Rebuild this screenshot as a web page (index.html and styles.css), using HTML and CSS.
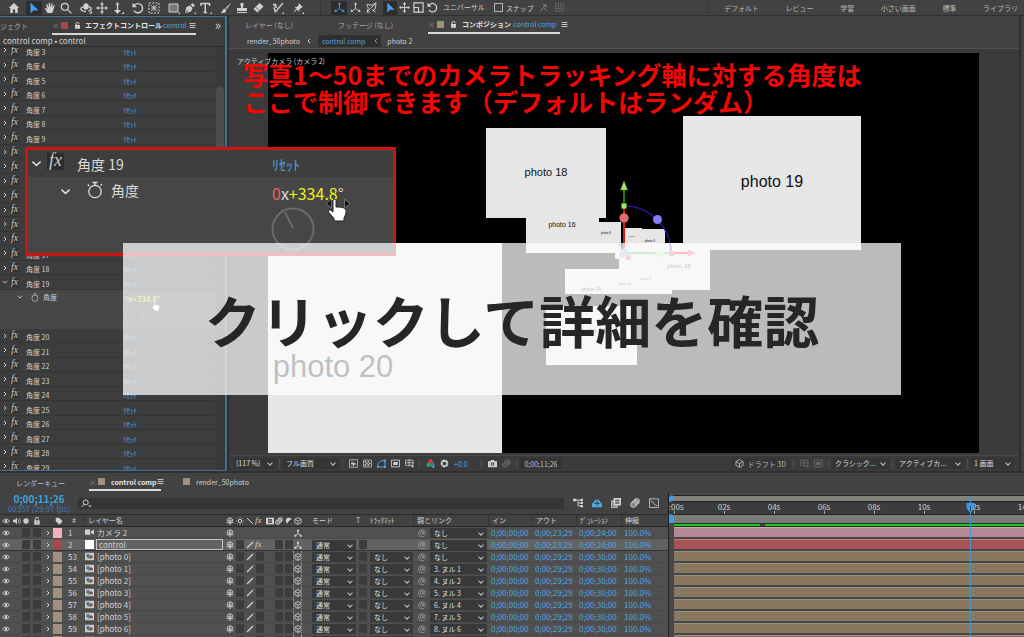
FILE: index.html
```html
<!DOCTYPE html>
<html lang="ja">
<head>
<meta charset="utf-8">
<title>control comp</title>
<link rel="stylesheet" href="styles.css">
</head>
<body>
<svg class="defs" aria-hidden="true">
  <symbol id="i-home" viewBox="0 0 12 12"><path fill="currentColor" d="M6 1 .8 6H2.300v5h2.600V7.500h2.200V11h2.600V6h1.500z"/></symbol>
  <symbol id="i-arrow" viewBox="0 0 12 12"><path fill="currentColor" d="M2.500.5v11l3-3h5z"/></symbol>
  <symbol id="i-hand" viewBox="0 0 12 12"><path fill="currentColor" d="M3.500 11 .8 6.300l1-.5L3.500 7.500 2.200 2.400l1-.3L4.800 5.500 4.700 1l1.200-.1.5 4.500L7.500 1.300l1.100.3-.5 4.200L9.800 3l.9.5L9 9 8 11z"/></symbol>
  <symbol id="i-search" viewBox="0 0 12 12"><g fill="none" stroke="currentColor" stroke-width="1.200"><circle cx="4.800" cy="4.800" r="3.500"/><path d="m7.400 7.400 4 4"/></g></symbol>
  <symbol id="i-find" viewBox="0 0 14 12"><g fill="none" stroke="currentColor" stroke-width="1.300"><circle cx="6" cy="4.500" r="3.300"/><path d="M3.600 7 .8 10.500"/></g><path fill="currentColor" d="M9 8.500h5l-2.500 2.500z"/></symbol>
  <symbol id="i-orbit" viewBox="0 0 12 12"><path fill="none" stroke="currentColor" stroke-width="1.400" d="M6 9.500C2 9.500.7 7.800 1 6.500 1.400 4.500 10 3.700 11 6c.4 1.200-1 2.500-2.500 3"/><path fill="currentColor" d="M3.500 2.500 6 1l2.500 1.500v4L6 8 3.500 6.500zM9 11.500h3v-3z"/></symbol>
  <symbol id="i-move" viewBox="0 0 12 12"><path stroke="currentColor" stroke-width="1.200" d="M6 2v8M2 6h8"/><path fill="currentColor" d="m6 0 2 2.500H4zM6 12l2-2.500H4zM0 6l2.500-2v4zM12 6 9.500 4v4z"/></symbol>
  <symbol id="i-dolly" viewBox="0 0 12 12"><path stroke="currentColor" stroke-width="1.400" d="M5.500 2v8"/><path fill="currentColor" d="m5.500 0 2 2.500h-4zM5.500 12l3.500-4H2zM9.500 12H12V9.500z"/></symbol>
  <symbol id="i-rot" viewBox="0 0 12 12"><path fill="none" stroke="currentColor" stroke-width="1.400" d="M2.500 3.200A4.600 4.600 0 1 1 2 8.500"/><path fill="currentColor" d="M.5.800v4.500H5z"/></symbol>
  <symbol id="i-region" viewBox="0 0 12 12"><path fill="none" stroke="currentColor" stroke-dasharray="2 1.300" d="M1 1h10v10H1z"/><path stroke="currentColor" d="M6 3v6M3 6h6M3 3l6 6M9 3 3 9" stroke-width=".8"/></symbol>
  <symbol id="i-rect" viewBox="0 0 12 12"><path fill="#777" stroke="currentColor" d="M1 2h9v8H1z"/><path fill="currentColor" d="M10 12h2v-2z"/></symbol>
  <symbol id="i-pen" viewBox="0 0 12 12"><path fill="currentColor" d="M1 11 2.500 5 6 3.500 8.500 6 7 9.500zM6.700 2.800 8.500 1 11 3.500 9.200 5.300zM10 12h2v-2z"/><path stroke="#424242" d="m1.500 10.500 3-3" stroke-width=".8"/></symbol>
  <symbol id="i-type" viewBox="0 0 12 12"><path fill="none" stroke="currentColor" stroke-width="1.500" d="M1 4V1.500h8.500V4M5.250 1.500v9M3.500 10.500h3.500"/><path fill="currentColor" d="M10 12h2v-2z"/></symbol>
  <symbol id="i-brush" viewBox="0 0 12 12"><path fill="currentColor" d="M11.500.5 5.500 6l1.200 1.300zM4.700 6.500c-2 .2-1.500 3-4 4 2.500 1.200 6 .2 5.500-2.500z"/></symbol>
  <symbol id="i-stamp" viewBox="0 0 12 12"><path fill="currentColor" d="M4.500 1h3v2l-.7 3H11v3H1V6h4.200l-.7-3zM1 10h10v1H1z"/></symbol>
  <symbol id="i-eraser" viewBox="0 0 12 12"><path fill="currentColor" d="m7.500 1 4 3.500-6 6-4-3.500z"/><path stroke="#424242" stroke-width=".8" d="m3.500 5 4 3.700"/></symbol>
  <symbol id="i-roto" viewBox="0 0 12 12"><path fill="none" stroke="currentColor" stroke-width="1.300" d="m11 1-6 7M3 1.500 4.500 5 2 6l1.500 4M1 2l2 2"/><path fill="currentColor" d="M4 7.500 2 11l4-2zM10 12h2v-2z"/></symbol>
  <symbol id="i-pin" viewBox="0 0 12 12"><path fill="currentColor" d="m6.500.8 4.500 4.500-1.500.3-2 2-.2 2.200-4.700-4.700 2.200-.2 2-2zM4 7 1 11l4-3zM10 12h2v-2z"/></symbol>
  <symbol id="i-axis" viewBox="0 0 12 12"><g fill="none" stroke="currentColor"><path d="M6 2v5L2 10M6 7l4 3"/></g><path fill="currentColor" d="m6 0 1.600 2.600H4.400zM.5 11l.8-3 2 2.500zM11.500 11l-.8-3-2 2.500z"/></symbol>
  <symbol id="i-axis3" viewBox="0 0 12 12"><path fill="none" stroke="currentColor" d="M1 2.500 6.500 3.500 11 1 10 7.500 7.500 9M1 2.500 2.500 7 1 11M11 1 1 11h3M6.500 8.500l4 2.500"/></symbol>
  <symbol id="i-scale" viewBox="0 0 12 12"><path fill="none" stroke="currentColor" stroke-width="1.300" d="M1 1h10v10H1zM1 6h5v5"/></symbol>
  <symbol id="i-snap" viewBox="0 0 12 12"><path fill="none" stroke="currentColor" d="m2 11 3-4 4-4M5.500 2.500H9.500V6M6 6l4 4"/></symbol>
  <symbol id="i-grid" viewBox="0 0 12 12"><path fill="none" stroke="currentColor" stroke-dasharray="1.500 1.500" d="M1 1h10v10H1zM4 4h4v4H4z"/></symbol>
  <symbol id="i-lock" viewBox="0 0 12 12"><path fill="currentColor" d="M2 5h8v6.500H2z"/><path fill="none" stroke="currentColor" stroke-width="1.500" d="M3.500 5.500V2.700a2.500 2 0 0 1 5 0v.8"/><path stroke="#424242" stroke-width="1.200" d="M6 7v2.500"/></symbol>
  <symbol id="i-menu" viewBox="0 0 12 12"><path stroke="currentColor" stroke-width="1.400" d="M1 2.500h10M1 6h10M1 9.500h10"/></symbol>
  <symbol id="i-right" viewBox="0 0 12 12"><path fill="none" stroke="currentColor" stroke-width="2" d="m4 2 4 4-4 4"/></symbol>
  <symbol id="i-left" viewBox="0 0 12 12"><path fill="none" stroke="currentColor" stroke-width="2" d="M8 2 4 6l4 4"/></symbol>
  <symbol id="i-down" viewBox="0 0 12 12"><path fill="none" stroke="currentColor" stroke-width="1.700" d="m1.500 4 4.500 4 4.500-4"/></symbol>
  <symbol id="i-watch" viewBox="0 0 16 18"><g fill="none" stroke="currentColor" stroke-width="1.300"><circle cx="8" cy="10.500" r="6.200"/><path d="M8 4V1.500M5.500 1.500h5M2 5 .8 3.500M13.500 4.500l1.500-1.200"/></g></symbol>
  <symbol id="i-eye" viewBox="0 0 12 12"><path fill="none" stroke="currentColor" stroke-width="1.400" d="M1 6c2.500-3.700 7.500-3.700 10 0-2.500 3.700-7.500 3.700-10 0z"/><circle cx="6" cy="6" r="1.900" fill="currentColor"/></symbol>
  <symbol id="i-audio" viewBox="0 0 12 12"><path fill="currentColor" d="M0 4h3l3-3v10L3 8H0z"/><path fill="none" stroke="currentColor" d="M7.500 3.500a4 4 0 0 1 0 5M9 1.500a6 6 0 0 1 0 9"/></symbol>
  <symbol id="i-dot" viewBox="0 0 12 12"><circle cx="6" cy="6" r="4" fill="currentColor"/></symbol>
  <symbol id="i-tag" viewBox="0 0 12 12"><path fill="currentColor" d="M1 1h5l5.500 5.500-5 5L1 6z"/></symbol>
  <symbol id="i-shy" viewBox="0 0 12 12"><path fill="none" stroke="currentColor" stroke-width="1.500" d="M2 6V4.500C2 .5 10 .5 10 4.500V6zM6 2v10M1 8.500h10"/></symbol>
  <symbol id="i-sun" viewBox="0 0 12 12"><circle cx="6" cy="6" r="2.500" fill="none" stroke="currentColor" stroke-width="1.500"/><path stroke="currentColor" d="M6 0v2M6 10v2M0 6h2M10 6h2M2 2l1 1M9 9l1 1M10 2 9 3M3 9l-1 1"/></symbol>
  <symbol id="i-slash" viewBox="0 0 12 12"><path stroke="currentColor" stroke-width="1.800" d="m1.500 10.500 9-9"/></symbol>
  <symbol id="i-bslash" viewBox="0 0 12 12"><path stroke="currentColor" stroke-width="1.500" d="m1.500 1.500 9 9"/></symbol>
  <symbol id="i-frame" viewBox="0 0 12 12"><path fill="currentColor" d="M0 1h12v10H0z"/><path fill="#555" d="M3 3h6v2.500H3zM3 6.500h6V9H3z"/></symbol>
  <symbol id="i-blur" viewBox="0 0 12 12"><g fill="#888" stroke="currentColor"><circle cx="8" cy="4" r="3.300"/><circle cx="6" cy="6" r="3.300"/><circle cx="4" cy="8" r="3.300"/></g></symbol>
  <symbol id="i-adj" viewBox="0 0 12 12"><circle cx="6" cy="6" r="4.700" fill="currentColor"/><path fill="#333" d="M3 9.500A4.300 4.300 0 0 0 9.500 3z"/></symbol>
  <symbol id="i-cube" viewBox="0 0 12 12"><path fill="none" stroke="currentColor" stroke-width="1.200" d="M6 .8 10.800 3.500v5L6 11.200 1.200 8.500v-5zM1.200 3.500 6 6.200l4.800-2.700M6 6.200v5"/></symbol>
  <symbol id="i-tri" viewBox="0 0 12 12"><path fill="none" stroke="currentColor" stroke-width="1.300" d="M6 3v4L2.500 9.500M6 7l3.500 2.500"/><path fill="currentColor" d="M4.500 1h3v3h-3zM.5 8.500h3v3h-3zM8.500 8.500h3v3h-3z"/></symbol>
  <symbol id="i-spiral" viewBox="0 0 12 12"><path fill="none" stroke="currentColor" stroke-width="1.100" d="M10 10A5.300 5.300 0 1 1 11 5c0 3-3 3-3 1V3.500M8 6a2.200 2.200 0 1 1-.2-1"/></symbol>
  <symbol id="i-cam" viewBox="0 0 12 12"><path fill="currentColor" d="M0 2h7v7H0zM8 4.500 12 2v7L8 6.500z"/></symbol>
  <symbol id="i-comp" viewBox="0 0 12 12"><path fill="#ccc" d="M0 1h12v10H0z"/><path fill="#3b6a9c" d="M2 3h4v4H2z"/><path fill="#439a58" d="M4.500 6 6 9H3z"/><circle cx="8" cy="6.500" r="2.300" fill="#8a3e38"/></symbol>
  <symbol id="i-fast" viewBox="0 0 12 12"><path fill="none" stroke="currentColor" d="M.5 1h11v10H.5zM4 3v6M2.500 6h6"/><path fill="currentColor" d="m5 4 5 3-3 .5L5.500 10z"/></symbol>
  <symbol id="i-checker" viewBox="0 0 12 12"><path fill="none" stroke="currentColor" d="M.5 1.500h11v9H.5z"/><path fill="currentColor" d="M2 3h2v2H2zM6 3h2v2H6zM4 5h2v2H4zM8 5h2v2H8zM2 7h2v2H2zM6 7h2v2H6z"/></symbol>
  <symbol id="i-mask" viewBox="0 0 12 12"><path fill="none" stroke="currentColor" stroke-width="1.300" d="M1 10.500C1 5 3 2 10.500 2v8.500z"/><path fill="currentColor" d="M9 .5h3v3H9zM0 9h2.500v3H0zM9.500 9H12v3H9.500z"/></symbol>
  <symbol id="i-safe" viewBox="0 0 12 12"><path fill="none" stroke="currentColor" stroke-width="1.200" d="M.6 1.500h10.800v9H.6z"/><path fill="currentColor" d="M3 4h6v4H3z"/></symbol>
  <symbol id="i-guides" viewBox="0 0 12 12"><path fill="none" stroke="currentColor" d="M.5 1.500h10v7H.5zM5.500 0v10M0 5h12"/><path fill="currentColor" d="M8 9h4l-2 3z"/></symbol>
  <symbol id="i-rgb" viewBox="0 0 12 12"><circle cx="6" cy="3" r="3" fill="#d03a33"/><circle cx="3.500" cy="7.500" r="3" fill="#3aa53f"/><circle cx="8.500" cy="7.500" r="3" fill="#3c79c8"/><path fill="#ccc" d="M8 10h4l-2 2z"/></symbol>
  <symbol id="i-shutter" viewBox="0 0 12 12"><circle cx="6" cy="6" r="3.800" fill="none" stroke="currentColor" stroke-width="2.800"/><path stroke="#3b3b3b" d="m6 0 2 3M12 6l-3 1M8 12 7 9M1 9l3-1M1 3l2 2" stroke-width=".7"/></symbol>
  <symbol id="i-photo" viewBox="0 0 12 12"><path fill="currentColor" d="M0 3h3l1-1.700h4L9 3h3v8H0z"/><circle cx="6" cy="6.800" r="2.400" fill="#3b3b3b"/><circle cx="6" cy="6.800" r="1.200" fill="currentColor"/></symbol>
  <symbol id="i-flow" viewBox="0 0 12 12"><path fill="none" stroke="currentColor" stroke-width="1.100" d="M0 2.500h11M6 2.500V9.500h4M6 6h4"/><path fill="currentColor" d="M0 1h4v3H0zM9 1h3v3H9zM9 4.700h3v2.600H9zM9 8.300h3V11H9z"/></symbol>
  <symbol id="i-draft" viewBox="0 0 12 12"><path fill="currentColor" d="M0 11V7l2.500-2.500V3.500L4 2h4l1.500 1.500v1L12 7v4z"/><path stroke="#404040" d="M6 3v6M3 6.500h6" stroke-width="1.200"/></symbol>
  <symbol id="i-stack" viewBox="0 0 12 12"><path fill="#888" stroke="currentColor" d="M.5 3.500h7v8h-7z"/><path fill="currentColor" d="M3 0h9v9H3z"/><path fill="#555" d="M5 2h5v2H5zM5 5h5v2H5z"/></symbol>
  <symbol id="i-graph" viewBox="0 0 12 12"><path fill="none" stroke="currentColor" d="M.5 1h11v10.500H.5zM2 4c5 0 2 5 8 5M0 2.500 2 1"/></symbol>
  <symbol id="i-pointer" viewBox="0 0 22 24"><path fill="#fff" stroke="#222" d="M6 2c1-1.500 3-1 3 .5V9c5 0 9 .5 10 3 .5 2-.5 5-2 8v3H7v-2.500L1.500 14c-.7-1.700 1-2.700 2.300-1.700L6 14z"/></symbol>
</svg>

<div class="app">
  <header class="toolbar">
    <div class="tools" id="tools"></div>
    <div class="tools tools-view" id="viewTools"></div>
    <label class="snap"><input type="checkbox">スナップ</label>
    <div class="tools dim"><button aria-label="スナップ方向"><svg><use href="#i-snap"/></svg></button><button aria-label="グリッド"><svg><use href="#i-grid"/></svg></button></div>
    <nav class="spaces">
      <a href="#">デフォルト</a><a href="#">レビュー</a><a href="#">学習</a><a href="#">小さい画面</a><a href="#">標準</a><a href="#">ライブラリ</a>
    </nav>
  </header>

  <div class="upper">
    <section class="effects">
      <div class="tabs">
        <span class="tab-cut">ジェクト</span>
        <div class="tab on"><span class="x">×</span><i class="chip red"></i><svg><use href="#i-lock"/></svg><b>エフェクトコントロール</b><span class="blue">control</span><svg><use href="#i-menu"/></svg></div>
        <span class="more">»</span>
      </div>
      <div class="crumb-line">control comp • control</div>
      <div class="fx-body">
        <ul class="fx-list" id="fxList"></ul>
        <div class="scroll"><div class="thumb"></div></div>
      </div>
    </section>

    <section class="viewer">
      <div class="tabs viewer-tabs">
        <span class="tab-off">レイヤー (なし)</span>
        <span class="tab-off">フッテージ (なし)</span>
        <div class="tab on"><span class="x">×</span><i class="chip"></i><svg><use href="#i-lock"/></svg><b>コンポジション</b><span class="blue">control comp</span><svg><use href="#i-menu"/></svg></div>
      </div>
      <div class="path"><a href="#">render_50photo</a><svg><use href="#i-left"/></svg><a href="#" class="here">control comp <svg><use href="#i-left"/></svg></a><a href="#">photo 2</a></div>
      <div class="stage">
        <svg class="comp" viewBox="268 53 711 400" preserveAspectRatio="xMinYMin meet">
          <path fill="#000" d="M268 53h711v400H268z"/>
          <g fill="#e6e6e6">
            <path d="M268 243h234v210H268zM486 128h120v90H486zM526 218h73v35h-73zM599 222h22v31h-22zM623 228h19v26h-19zM642 229h23v30h-23zM683 116h178v134H683zM640 243h70v47h-70zM615 253h57v6h-57zM619 259h53v10h-53zM631 265h41v29h-41zM565 269h80v25h-80zM546 306h91v59h-91z"/>
          </g>
          <g fill="#111" class="photo-name" text-anchor="middle">
            <text x="333" y="377" font-size="31">photo 20</text>
            <text x="772" y="187" font-size="16">photo 19</text>
            <text x="546" y="176" font-size="11">photo 18</text>
            <text x="562" y="227" font-size="7">photo 16</text>
            <text x="679" y="268" font-size="6">photo 15</text>
            <text x="591" y="291" font-size="5">photo 14</text>
            <text x="592" y="333" font-size="8">photo 12</text>
            <text x="606" y="234" font-size="3">photo 8</text>
            <text x="632" y="237" font-size="2">photo 6</text>
            <text x="650" y="242" font-size="3">photo 9</text>
            <text x="625" y="285" font-size="3">photo 10</text>
            <text x="646" y="280" font-size="3">photo 11</text>
            <text x="624" y="246" font-size="3">photo 7</text>
          </g>
          <g fill="none" stroke-width="1.500">
            <path stroke="#22188c" d="M624 206a47 47 0 0 1 47 47"/>
            <path stroke="#22a234" d="M624 204v-16M628 253h42"/>
            <path stroke="#e01414" stroke-width="2" d="M624 208v41M674 253h16"/>
          </g>
          <path fill="#a6e860" stroke="#52a030" stroke-width=".6" d="m624 181 3.500 9h-7zM621.500 203.500h5v5h-5z"/>
          <path fill="#e06070" d="M669 251h5v5h-5zM688 249.500l8 3.500-8 3.500zM626 255h5v5h-5z"/>
          <circle cx="624" cy="218" r="4.700" fill="#dc6e70"/>
          <circle cx="657.500" cy="219.500" r="4.500" fill="#8480f4"/>
          <circle cx="660" cy="253" r="4.500" fill="#b4e6a0"/>
          <circle cx="624" cy="253" r="4.500" fill="#98a8d0"/>
        </svg>
        <div class="cam-name">アクティブカメラ (カメラ 2)</div>
        <p class="note">写真1〜50までのカメラトラッキング軸に対する角度は<br>ここで制御できます（デフォルトはランダム）</p>
      </div>
      <div class="view-foot">
        <span class="pick w42"><select aria-label="拡大率"><option>(117 %)</option></select></span>
        <i class="bar"></i>
        <span class="pick w56"><select aria-label="画質"><option>フル画質</option></select></span>
        <i class="bar"></i>
        <div class="foot-icons"><button aria-label="高速プレビュー"><svg><use href="#i-fast"/></svg></button><button aria-label="透明グリッド"><svg><use href="#i-checker"/></svg></button><button aria-label="マスク" class="blue"><svg><use href="#i-mask"/></svg></button><button aria-label="目標範囲"><svg><use href="#i-safe"/></svg></button><button aria-label="ガイド"><svg><use href="#i-guides"/></svg></button></div>
        <i class="bar"></i>
        <div class="foot-icons"><button aria-label="チャンネル"><svg><use href="#i-rgb"/></svg></button><button aria-label="露出"><svg><use href="#i-shutter"/></svg></button></div>
        <span class="blue expo">+0.0</span>
        <i class="bar"></i>
        <div class="foot-icons"><button aria-label="スナップショット"><svg><use href="#i-photo"/></svg></button><button aria-label="表示" class="faint"><svg><use href="#i-blur"/></svg></button></div>
        <i class="bar"></i>
        <button class="time-box">0;00;11;26</button>
        <button class="draft"><svg><use href="#i-cube"/></svg>ドラフト 3D</button>
        <i class="bar"></i>
        <div class="foot-icons faint"><button aria-label="グリッド 3D"><svg><use href="#i-guides"/></svg></button><button aria-label="プレビュー"><svg><use href="#i-safe"/></svg></button></div>
        <i class="bar"></i>
        <span class="pick w57"><select aria-label="レンダラー"><option>クラシック...</option></select></span>
        <i class="bar"></i>
        <span class="pick w68"><select aria-label="カメラ"><option>アクティブカ...</option></select></span>
        <i class="bar"></i>
        <span class="pick w42"><select aria-label="画面数"><option>1 画面</option></select></span>
      </div>
    </section>
    <div class="side"></div>
  </div>

  <section class="timeline">
    <div class="tabs tl-tabs">
      <span class="tab-off">レンダーキュー</span>
      <div class="tab on"><span class="x">×</span><i class="chip"></i><b>control comp</b><svg><use href="#i-menu"/></svg></div>
      <div class="tab"><i class="chip"></i><span>render_50photo</span></div>
    </div>
    <div class="tl-main">
      <div class="tl-left">
        <div class="tl-ctrl">
          <div class="clock"><strong>0;00;11;26</strong><span>00357 (29.97 fps)</span></div>
          <label class="find"><svg><use href="#i-find"/></svg><input type="text" aria-label="検索"></label>
          <div class="ctrl-icons"><button aria-label="フローチャート"><svg><use href="#i-flow"/></svg></button><button aria-label="シャイ" class="blue"><svg><use href="#i-draft"/></svg></button><button aria-label="フレームブレンド"><svg><use href="#i-stack"/></svg></button><button aria-label="モーションブラー"><svg><use href="#i-blur"/></svg></button><button aria-label="グラフエディター"><svg><use href="#i-graph"/></svg></button></div>
        </div>
        <table class="layers">
          <colgroup id="cols"></colgroup>
          <thead><tr id="headRow"></tr></thead>
          <tbody id="layerRows"></tbody>
        </table>
      </div>
      <div class="graph">
        <div class="nav-bar"></div>
        <div class="ruler"><span>0:00s</span><span>02s</span><span>04s</span><span>06s</span><span>08s</span><span>10s</span><span>12s</span><span>14s</span></div>
        <div class="work"></div>
        <div class="cache"><i></i></div>
        <div class="bars" id="bars"></div>
        <div class="playhead"><svg viewBox="0 0 8 10"><path fill="#3f9be8" d="M0 0h8v5L5 9H3L0 5z"/><path stroke="#1d5078" d="M4 3v5"/></svg></div>
      </div>
    </div>
  </section>

  <aside class="zoom">
    <div class="zoom-head"><svg class="z-down"><use href="#i-down"/></svg><i class="z-fx">fx</i><span class="z-name">角度 19</span><a href="#">ﾘｾｯﾄ</a></div>
    <div class="zoom-row"><svg class="z-down"><use href="#i-down"/></svg><svg class="z-watch"><use href="#i-watch"/></svg><span class="z-prop">角度</span><span class="z-val"><em>0</em>x<b>+334.8</b>°</span></div>
    <svg class="dial" viewBox="0 0 44 44"><circle cx="22" cy="22" r="20.500"/><path d="m22 21-8-16"/></svg>
    <svg class="z-arrows" viewBox="0 0 22 8"><path d="M5 0v8L0 4zM17 0v8l5-4z" fill="#111" stroke="#999" stroke-width=".6"/></svg>
    <svg class="z-hand"><use href="#i-pointer"/></svg>
  </aside>

  <a href="#" class="cta">クリックして詳細を確認</a>
</div>
<script src="app.js"></script>
</body>
</html>
```

FILE: styles.css
```css
*, *::after { box-sizing: border-box; }
body {
  margin: 0;
  background: #2a2a2a;
  color: #d0d0d0;
  font-family: "Noto Sans CJK JP", "Noto Sans", sans-serif;
  font-size: 7px;
  line-height: 12px;
}
button, select, input { font: inherit; color: inherit; border: 0; padding: 0; margin: 0; background: none; appearance: none; }
button { display: flex; align-items: center; justify-content: center; }
a { color: inherit; text-decoration: none; }
svg { display: block; flex: none; width: 9px; height: 9px; }
.defs { position: absolute; width: 0; height: 0; }
.blue { color: #4aa6e0; }
.app { position: relative; display: flex; flex-direction: column; height: 100vh; overflow: hidden; white-space: nowrap; }

/* toolbar */
.toolbar { display: flex; align-items: center; height: 16px; flex: none; padding-left: 6px; background: #424242; border-bottom: 1px solid #303030; }
.tools { display: flex; gap: 4px; }
.tools svg { width: 12px; height: 12px; }
.group { display: flex; }
.tools button { width: 16px; height: 14px; }
.tools .on { background: #2d2d2d; color: #459fee; }
.tools-view { margin-left: 14px; padding-left: 10px; border-left: 1px solid #363636; }
.tools-view svg { width: 11px; height: 11px; }
.tools-view .group + .group button { width: 14px; }
.snap { display: flex; align-items: center; gap: 3px; margin-left: 9px; }
.snap input { width: 9px; height: 9px; border: 1px solid #b4b4b4; }
.dim { gap: 0; margin-left: 2px; color: #9a9a9a; }
.dim svg { width: 9px; height: 9px; }
.spaces { display: flex; flex: 1; justify-content: space-between; margin-left: auto; padding: 0 6px 0 15px; max-width: 316px; border-left: 1px solid #363636; color: #b8b8b8; }

/* upper work area */
.upper { display: flex; gap: 2px; flex: 1; min-height: 0; background: #2f2f2f; padding-bottom: 2px; }
.tabs { display: flex; align-items: center; height: 18px; flex: none; }
.tab { display: flex; align-items: center; height: 17px; border-bottom: 2px solid transparent; }
.tab.on { border-color: #d8d8d8; color: #e4e4e4; }
.tab svg { width: 7px; height: 7px; }
.x { width: 9px; flex: none; color: #999; }
.chip { width: 7px; height: 7px; flex: none; margin-right: 6px; background: #a0917f; }
.chip.red { background: #a24a49; }
.tab-off { color: #a8a8a8; }

.effects { display: flex; flex-direction: column; width: 227px; flex: none; border: 1px solid #3f7294; border-width: 1px 2px 1px 0; background: #3d3d3d; }
.tab-cut { width: 52px; flex: none; color: #aaa; }
.effects .tab svg + b { margin: 0 1px 0 4px; }
.effects .tab svg:last-child { margin: 0 0 0 3px; }
.more { margin: 0 4px 2px auto; font-size: 13px; color: #ccc; }
.crumb-line { height: 12px; flex: none; padding-left: 3px; font-size: 8px; line-height: 11px; border-bottom: 1px solid #2b2b2b; }
.fx-body { display: flex; flex: 1; min-height: 0; overflow: hidden; }
.fx-list { flex: 1; list-style: none; margin: -4px 0 0; padding: 0; }
.fx-row { display: grid; grid-template-columns: 10px 16px 97px 1fr; align-items: center; height: 15px; border-bottom: 1px solid #353535; }
.fx-row.short { height: 14px; }
.fx-row svg { width: 6px; height: 6px; margin-left: 2px; }
.fx-row i, .z-fx { font-family: "Liberation Serif", "DejaVu Serif", serif; color: #c8c8c8; }
.fx-row i { width: 9px; height: 9px; font-size: 10px; line-height: 8px; background: #323232; text-align: center; }
.fx-row span, .fx-row a { line-height: 10px; padding-top: 3px; }
.fx-row a { color: #4aa6e0; }
.fx-detail { display: grid; grid-template-columns: 18px 12px 13px 81px 1fr; grid-template-rows: 14px 1fr; align-items: center; height: 39px; background: #474747; position: relative; }
.fx-detail .s-down { width: 6px; height: 6px; margin-left: 17px; }
.fx-detail .s-watch { width: 8px; height: 9px; margin-left: 13px; }
.fx-detail .val { padding-top: 4px; font-size: 8px; color: #ddd; }
.fx-detail em { font-style: normal; color: #e26a6a; }
.fx-detail b { font-weight: 400; color: #f0f01e; }
.fx-detail .s-hand { position: absolute; left: 151px; top: 10px; width: 10px; height: 12px; }
.fx-detail .s-dial { grid-column: 5; width: 20px; height: 20px; fill: none; stroke: #666; }
.scroll { width: 10px; background: #393939; }
.thumb { height: 150px; margin: 40px 1px 0; border-radius: 4px; background: #4d4d4d; }

.viewer { display: flex; flex-direction: column; flex: 1; min-width: 0; background: #3b3b3b; }
.viewer-tabs { padding-left: 16px; background: #424242; }
.viewer-tabs .tab-off { width: 93px; }
.viewer-tabs .tab-off + .tab { width: 132px; }
.viewer-tabs .tab-off + .tab-off { width: 90px; }
.viewer-tabs .tab b { margin: 0 2px 0 5px; }
.viewer-tabs .tab svg:last-child { margin-left: 5px; }
.path { display: flex; align-items: center; gap: 6px; height: 15px; flex: none; padding-left: 18px; background: #424242; border-bottom: 1px solid #505050; }
.path svg { width: 6px; height: 6px; }
.path .here { display: flex; align-items: center; gap: 8px; padding: 0 2px 0 4px; background: #303030; color: #4aa6e0; }
.stage { position: relative; flex: 1; min-height: 0; padding: 4px 40px 0 39px; overflow: hidden; }
.comp { width: 100%; height: auto; }
.photo-name { font-family: "Liberation Sans", Arial, sans-serif; }
.cam-name { position: absolute; left: 8px; top: 6px; color: #d0d0d0; }
.note { position: absolute; left: 14px; top: 12px; margin: 0; color: #f40606; font-size: 25px; line-height: 27px; font-weight: 700; }
.view-foot { display: flex; align-items: center; gap: 3px; height: 16px; flex: none; padding: 0 5px 0 4px; border-top: 1px solid #484848; }
.bar { width: 1px; height: 10px; background: #505050; }
.pick { position: relative; display: block; background: #353535; }
.pick select { display: block; width: 100%; height: 11px; padding-left: 3px; line-height: 11px; color: #dedede; }
.pick::after { content: ""; position: absolute; right: 4px; top: 3px; width: 4px; height: 4px; border: solid #c4c4c4; border-width: 0 1px 1px 0; transform: rotate(45deg); pointer-events: none; }
.w42 { width: 43px; }
.w56 { width: 56px; }
.w57 { width: 57px; }
.w68 { width: 68px; }
.foot-icons { display: flex; }
.foot-icons button { width: 14px; }
.faint { opacity: .3; }
.expo { width: 24px; }
.time-box { width: 42px; height: 11px; background: #333; color: #c0c0c0; }
.draft { gap: 4px; height: 11px; margin-left: auto; padding: 0 4px; background: #363636; color: #b8b8b8; }
.side { width: 3px; background: #424242; }

/* timeline */
.timeline { display: flex; flex-direction: column; height: 164px; flex: none; background: #424242; overflow: hidden; }
.tl-tabs { height: 19px; padding-left: 16px; }
.tl-tabs .tab-off { width: 73px; color: #bbb; }
.tl-tabs .tab.on { width: 72px; margin-right: 22px; }
.tl-tabs .tab svg { margin-left: auto; }
.tl-main { display: flex; flex: 1; min-height: 0; }
.tl-left { width: 669px; flex: none; border-right: 1px solid #222; }
.tl-ctrl { display: flex; align-items: center; height: 22px; }
.clock { width: 78px; color: #3f78b4; font-size: 8px; line-height: 9px; text-align: center; }
.clock strong, .clock span { display: block; }
.clock strong { font-size: 10px; line-height: 10px; color: #3fa4dc; }
.find { display: flex; align-items: center; width: 486px; height: 11px; padding-left: 3px; background: #353535; }
.find svg { width: 11px; height: 9px; }
.find input { flex: 1; height: 11px; outline: 0; }
.ctrl-icons { display: flex; flex: 1; justify-content: space-between; padding: 0 9px; }
.ctrl-icons svg { width: 10px; height: 10px; }
.layers { width: 668px; table-layout: fixed; border-collapse: separate; border-spacing: 0; }
.layers th, .layers td { padding: 0; height: 12px; line-height: 11px; text-align: left; overflow: hidden; font-weight: 400; border-bottom: 1px solid #484848; }
.layers th { border-bottom: 1px solid #262626; border-top: 1px solid #2a2a2a; background: #424242; }
.layers th.sep { border-left: 1px solid #333; padding-left: 3px; }
.layers td { background: #505050; }
.layers .sel td { background: #626262; border-bottom-color: #333; }
.layers svg { width: 8px; height: 8px; margin: auto; }
.layers .chev svg { width: 6px; height: 6px; }
.sq { display: block; width: 8px; height: 9px; margin: auto; background: #3c3c3c; }
.lab { display: block; width: 9px; height: 10px; margin: 0 1px; }
.layers .num { padding-left: 3px; font-size: 8px; }
.name { display: flex; align-items: center; height: 11px; font-size: 8px; }
.layers .name svg { margin: 0 3px 0 1px; width: 9px; height: 9px; }
.name i { width: 9px; height: 9px; margin: 0 2px 0 1px; background: #fff; }
.name.edit span { width: 127px; height: 11px; padding-left: 2px; border: 1px solid #c8c8c8; line-height: 9px; }
.layers .box3d { border-left: 1px dotted #999; border-right: 1px dotted #999; }
.layers .fxs { font: italic 9px/10px "Liberation Serif", serif; }
.layers .pick { background: #393939; }
.layers .pick select { height: 10px; line-height: 10px; padding-left: 4px; }
.layers td.t { color: #4aa6e0; font-size: 8px; padding-left: 3px; }
.parent { display: flex; align-items: center; }
.layers .parent svg { margin: 0 4px 0 5px; width: 8px; height: 8px; color: #aaa; }
.parent .pick { width: 57px; }

.graph { position: relative; flex: 1; min-width: 0; padding-top: 2px; overflow: hidden; background: #484848; border-top: 1px solid #424242; }
.nav-bar { height: 7px; border: 1px solid #222; border-left: 5px solid #3f9be8; border-right: 0; border-radius: 4px 0 0 0; background: #85827c; }
.ruler { display: flex; height: 12px; margin-left: -20px; background: #3c3c3c; font-size: 8px; line-height: 9px; }
.ruler span { position: relative; width: 50px; flex: none; text-align: center; }
.ruler span::after { content: ""; display: block; width: 1px; height: 3px; margin: 0 auto; background: #aaa; }
.work { height: 9px; border-left: 5px solid #3f9be8; border-top: 1px solid #222; background: #7b7b79; }
.cache { height: 4px; margin-left: 5px; border: solid #143c14; border-width: 1px 0; background: #1cc52c; }
.cache i { display: block; width: 5px; height: 2px; margin-left: 86px; background: #4a3a4a; }
.bars { padding-left: 5px; }
.bars div { height: 12px; border-top: 1px solid #919080; border-bottom: 2px solid #464646; background: #8a775f; }
.bars .pink { background: #b48894; border-top-color: #d0a3ad; }
.bars .rose { background: #a65456; border-top-color: #c0807f; }
.playhead { position: absolute; left: 301px; top: 3px; bottom: 0; width: 1px; background: #4594cc; }
.playhead svg { position: absolute; left: -4px; top: 7px; width: 9px; height: 10px; }

/* magnified parameter box */
.zoom { position: absolute; left: 25px; top: 147px; width: 371px; height: 109px; border: 3px solid #d01313; background: #464646; color: #dadada; font-size: 14px; }
.zoom-head { display: flex; align-items: center; height: 27px; background: #3e3e3e; }
.z-down { width: 11px; height: 11px; margin-left: 3px; }
.zoom-head .z-fx { width: 17px; height: 17px; margin: 0 13px 4px 5px; background: #2d2d2d; font-size: 18px; line-height: 15px; text-align: center; }
.z-name { width: 195px; }
.zoom-head a { color: #4aa6e0; }
.zoom-row { display: flex; align-items: center; height: 28px; }
.zoom-row .z-down { margin-left: 32px; }
.z-watch { width: 16px; height: 18px; margin: 0 8px 3px 16px; }
.z-prop { width: 161px; margin-bottom: 3px; }
.z-val { font-size: 16px; padding-top: 3px; }
.z-val em { font-style: normal; color: #e26a6a; }
.z-val b { font-weight: 400; color: #f0f01e; }
.dial { width: 44px; height: 44px; margin: 2px 0 0 243px; fill: none; stroke: #6b6b6b; stroke-width: 2; }
.z-arrows { position: absolute; left: 298px; top: 49px; width: 24px; height: 9px; }
.z-hand { position: absolute; left: 299px; top: 48px; width: 22px; height: 24px; }

/* call to action */
.cta { position: absolute; left: 12%; right: 12%; top: 243px; height: 152px; display: flex; align-items: center; justify-content: center; background: rgba(255, 255, 255, .735); color: #262626; font-size: 56px; font-weight: 700; line-height: 152px; }
```

FILE: app.js
```js
const icon = (id, cls = '') => `<svg class="${cls}"><use href="#i-${id}"/></svg>`;
const tool = (id, on) => `<button aria-label="${id}"${on ? ' class="on"' : ''}>${icon(id)}</button>`;
const group = (ids, on) => `<div class="group">${ids.map(i => tool(i, i === on)).join('')}</div>`;
const put = (id, html) => { document.getElementById(id).innerHTML = html; };

put('tools', [['home'], ['arrow', 'hand', 'search'], ['orbit', 'move', 'dolly'], ['rot', 'region'],
  ['rect', 'pen', 'type'], ['brush', 'stamp', 'eraser'], ['roto'], ['pin']].map(g => group(g, 'arrow')).join(''));
put('viewTools', group(['axis', 'axis', 'axis3']).replace('<button', '<button class="on"') +
  group(['arrow', 'move', 'scale', 'rot'], 'arrow') + '<span>ユニバーサル</span>');

let fx = '';
for (let n = 3; n < 30; n++) {
  fx += `<li class="fx-row${n % 2 ? '' : ' short'}">${icon(n === 19 ? 'down' : 'right')}<i>fx</i><span>角度 ${n}</span><a href="#">ﾘｾｯﾄ</a></li>`;
  if (n === 19) {
    fx += `<li class="fx-detail">${icon('down', 's-down')}${icon('watch', 's-watch')}<i></i><span>角度</span>` +
      `<span class="val"><em>0</em>x<b>+334.8</b>°</span>` +
      `<svg class="s-dial" viewBox="0 0 20 20"><circle cx="10" cy="10" r="9"/><path d="M10 10 6 3"/></svg>${icon('pointer', 's-hand')}</li>`;
  }
}
put('fxList', fx);

const cols = [
  [12, icon('eye')], [9, icon('audio')], [9, icon('dot')], [13, icon('lock')], [9, ''], [13, icon('tag')], [19, '　#'],
  [141, 'レイヤー名', 1], [10, icon('shy')], [10, icon('sun')], [10, icon('bslash')], [10, '<span class="fxs">fx</span>'],
  [9, icon('frame')], [10, icon('blur')], [9, icon('adj')], [9, icon('cube')], [10, ''],
  [44, 'モード'], [14, 'T'], [43, 'ﾄﾗｯｸﾏｯﾄ'], [75, '親とリンク', 1], [44, 'イン', 1], [44, 'アウト', 1],
  [45, 'ﾃﾞｭﾚｰｼｮﾝ', 1], [47, '伸縮', 1]
];
put('cols', cols.map(c => `<col style="width:${c[0]}px">`).join(''));
put('headRow', cols.map(c => `<th${c[2] ? ' class="sep"' : ''}>${c[1]}</th>`).join(''));

const layers = [
  { n: 1, name: 'カメラ 2', kind: 'cam', color: '#f2b3be', parent: 'なし' },
  { n: 2, name: 'control', kind: 'null', color: '#a24a49', parent: 'なし' }
];
for (let i = 0; i < 8; i++) {
  layers.push({ n: 53 + i, name: `[photo ${i}]`, kind: 'comp', color: '#a0917f', parent: i ? `${i + 2}. ヌル ${i}` : 'なし' });
}
const sq = '<span class="sq"></span>';
const pick = (v, l) => `<span class="pick"><select aria-label="${l}"><option>${v}</option></select></span>`;
put('layerRows', layers.map(r => {
  const cam = r.kind === 'cam', nul = r.kind === 'null', comp = r.kind === 'comp';
  const name = nul ? `<div class="name edit"><i></i><span>${r.name}</span></div>` : `<div class="name">${icon(r.kind)}<span>${r.name}</span></div>`;
  const cells = [
    icon('eye'), '', sq, sq, icon('right'), `<span class="lab" style="background:${r.color}"></span>`, r.n, name,
    icon('shy'), cam ? '' : sq, cam ? '' : icon('slash'), nul ? '<span class="fxs">fx</span>' : cam ? '' : sq,
    '', cam ? '' : sq, cam ? '' : sq, icon(comp ? 'cube' : 'tri'), '',
    cam ? '' : pick('通常', 'モード'), cam ? '' : sq, comp ? pick('なし', 'トラックマット') : '',
    `<div class="parent">${icon('spiral')}${pick(r.parent, '親')}</div>`,
    '0;00;00;00', comp ? '0;00;29;29' : '0;00;23;29', comp ? '0;00;30;00' : '0;00;24;00', '100.0%'
  ];
  const cls = { 4: 'chev', 6: 'num', 15: comp ? 'box3d' : '', 21: 't', 22: 't', 23: 't', 24: 't' };
  return `<tr${nul ? ' class="sel"' : ''}>${cells.map((c, i) => `<td class="${cls[i] || ''}">${c}</td>`).join('')}</tr>`;
}).join(''));
put('bars', layers.map(r => `<div class="${{ cam: 'pink', null: 'rose', comp: '' }[r.kind]}"></div>`).join(''));
```
